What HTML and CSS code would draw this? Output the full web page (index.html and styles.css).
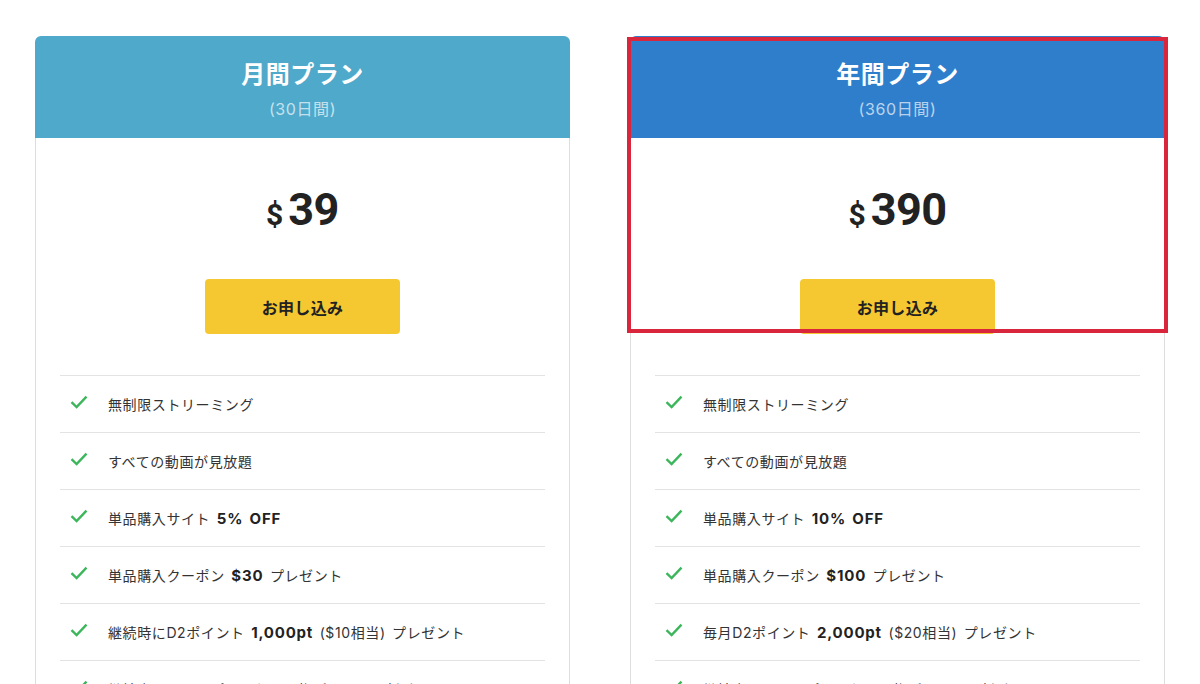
FILE: index.html
```html
<!DOCTYPE html>
<html lang="ja">
<head>
<meta charset="utf-8">
<title>プラン</title>
<link rel="stylesheet" href="styles.css">
</head>
<body>
<main class="plans">
  <section class="plan plan-monthly">
    <header class="plan-head">
      <h2 class="plan-title">月間プラン</h2>
      <p class="plan-term">(30日間)</p>
    </header>
    <div class="plan-body">
      <div class="price"><span class="cur">$</span><span class="amt">39</span></div>
      <a class="apply" href="#">お申し込み</a>
      <ul class="features">
        <li><svg class="check" viewBox="0 0 18 14"><path d="M1.5 7.2 L6.6 12 L16.5 1.6"/></svg><span>無制限ストリーミング</span></li>
        <li><svg class="check" viewBox="0 0 18 14"><path d="M1.5 7.2 L6.6 12 L16.5 1.6"/></svg><span>すべての動画が見放題</span></li>
        <li><svg class="check" viewBox="0 0 18 14"><path d="M1.5 7.2 L6.6 12 L16.5 1.6"/></svg><span>単品購入サイト <b>5% OFF</b></span></li>
        <li><svg class="check" viewBox="0 0 18 14"><path d="M1.5 7.2 L6.6 12 L16.5 1.6"/></svg><span>単品購入クーポン <b>$30</b> プレゼント</span></li>
        <li><svg class="check" viewBox="0 0 18 14"><path d="M1.5 7.2 L6.6 12 L16.5 1.6"/></svg><span>継続時にD2ポイント <b>1,000pt</b> ($10相当) プレゼント</span></li>
        <li><svg class="check" viewBox="0 0 18 14"><path d="M1.5 7.2 L6.6 12 L16.5 1.6"/></svg><span>継続中はショップでのお買い物がいつでも割引</span></li>
      </ul>
    </div>
  </section>
  <section class="plan plan-yearly">
    <header class="plan-head">
      <h2 class="plan-title">年間プラン</h2>
      <p class="plan-term">(360日間)</p>
    </header>
    <div class="plan-body">
      <div class="price"><span class="cur">$</span><span class="amt">390</span></div>
      <a class="apply" href="#">お申し込み</a>
      <ul class="features">
        <li><svg class="check" viewBox="0 0 18 14"><path d="M1.5 7.2 L6.6 12 L16.5 1.6"/></svg><span>無制限ストリーミング</span></li>
        <li><svg class="check" viewBox="0 0 18 14"><path d="M1.5 7.2 L6.6 12 L16.5 1.6"/></svg><span>すべての動画が見放題</span></li>
        <li><svg class="check" viewBox="0 0 18 14"><path d="M1.5 7.2 L6.6 12 L16.5 1.6"/></svg><span>単品購入サイト <b>10% OFF</b></span></li>
        <li><svg class="check" viewBox="0 0 18 14"><path d="M1.5 7.2 L6.6 12 L16.5 1.6"/></svg><span>単品購入クーポン <b>$100</b> プレゼント</span></li>
        <li><svg class="check" viewBox="0 0 18 14"><path d="M1.5 7.2 L6.6 12 L16.5 1.6"/></svg><span>毎月D2ポイント <b>2,000pt</b> ($20相当) プレゼント</span></li>
        <li><svg class="check" viewBox="0 0 18 14"><path d="M1.5 7.2 L6.6 12 L16.5 1.6"/></svg><span>継続中はショップでのお買い物がいつでも割引</span></li>
      </ul>
    </div>
    <div class="highlight"></div>
  </section>
</main>
</body>
</html>
```
FILE: styles.css
```css
html, body {
  margin: 0;
  padding: 0;
  background: #ffffff;
}
body {
  font-family: Inter, "Noto Sans CJK JP", sans-serif;
  color: #333333;
  overflow: hidden;
  height: 684px;
}
.plans {
  display: flex;
  gap: 60px;
  padding: 36px 0 0 35px;
}
.plan {
  position: relative;
  width: 535px;
  flex: none;
}
.plan-head {
  height: 102px;
  box-sizing: border-box;
  padding-top: 23px;
  text-align: center;
  border-radius: 6px 6px 0 0;
  color: #ffffff;
}
.plan-monthly .plan-head { background: #4fa9cb; }
.plan-yearly .plan-head { background: #2f7ecb; }
.plan-title {
  margin: 0;
  font-family: "Noto Sans CJK JP", sans-serif;
  font-size: 24px;
  line-height: 28px;
  font-weight: 700;
  letter-spacing: 0.5px;
}
.plan-term {
  margin: 8px 0 0;
  font-size: 16px;
  line-height: 28px;
  letter-spacing: 0.6px;
  color: rgba(255, 255, 255, 0.68);
}
.plan-body {
  border: 1px solid #dddddd;
  border-top: none;
  padding: 0 24px 40px;
  display: flex;
  flex-direction: column;
  align-items: center;
}
.price {
  margin-top: 44px;
  height: 56px;
  display: flex;
  align-items: baseline;
  justify-content: center;
  color: #222222;
  font-family: Roboto, "Liberation Sans", sans-serif;
  font-weight: 700;
  line-height: 56px;
}
.cur {
  font-size: 30px;
  margin-right: 5px;
}
.amt {
  font-size: 45px;
  letter-spacing: -0.5px;
}
.apply {
  margin-top: 41px;
  width: 195px;
  height: 55px;
  display: flex;
  align-items: center;
  justify-content: center;
  background: #f5c831;
  border-radius: 4px;
  color: #222222;
  font-family: "Noto Sans CJK JP", sans-serif;
  font-size: 16px;
  font-weight: 700;
  text-decoration: none;
  letter-spacing: 0.3px;
}
.features {
  list-style: none;
  margin: 41px 0 0;
  padding: 0;
  align-self: stretch;
}
.features li {
  height: 56px;
  border-top: 1px solid #e3e3e3;
  display: flex;
  align-items: center;
  padding-left: 10px;
  font-size: 14px;
  letter-spacing: 0.6px;
  word-spacing: 2px;
  color: #333333;
}
.features b {
  font-weight: 700;
  color: #222222;
  font-size: 15px;
  letter-spacing: 0.8px;
}
.check {
  width: 18px;
  height: 14px;
  margin-right: 20px;
  margin-top: -4px;
  flex: none;
}
.check path {
  fill: none;
  stroke: #3cb65b;
  stroke-width: 2.4;
}
.highlight {
  position: absolute;
  left: -3px;
  top: 1px;
  width: 541px;
  height: 296px;
  box-sizing: border-box;
  border: 4px solid #d9263c;
  pointer-events: none;
}
```
